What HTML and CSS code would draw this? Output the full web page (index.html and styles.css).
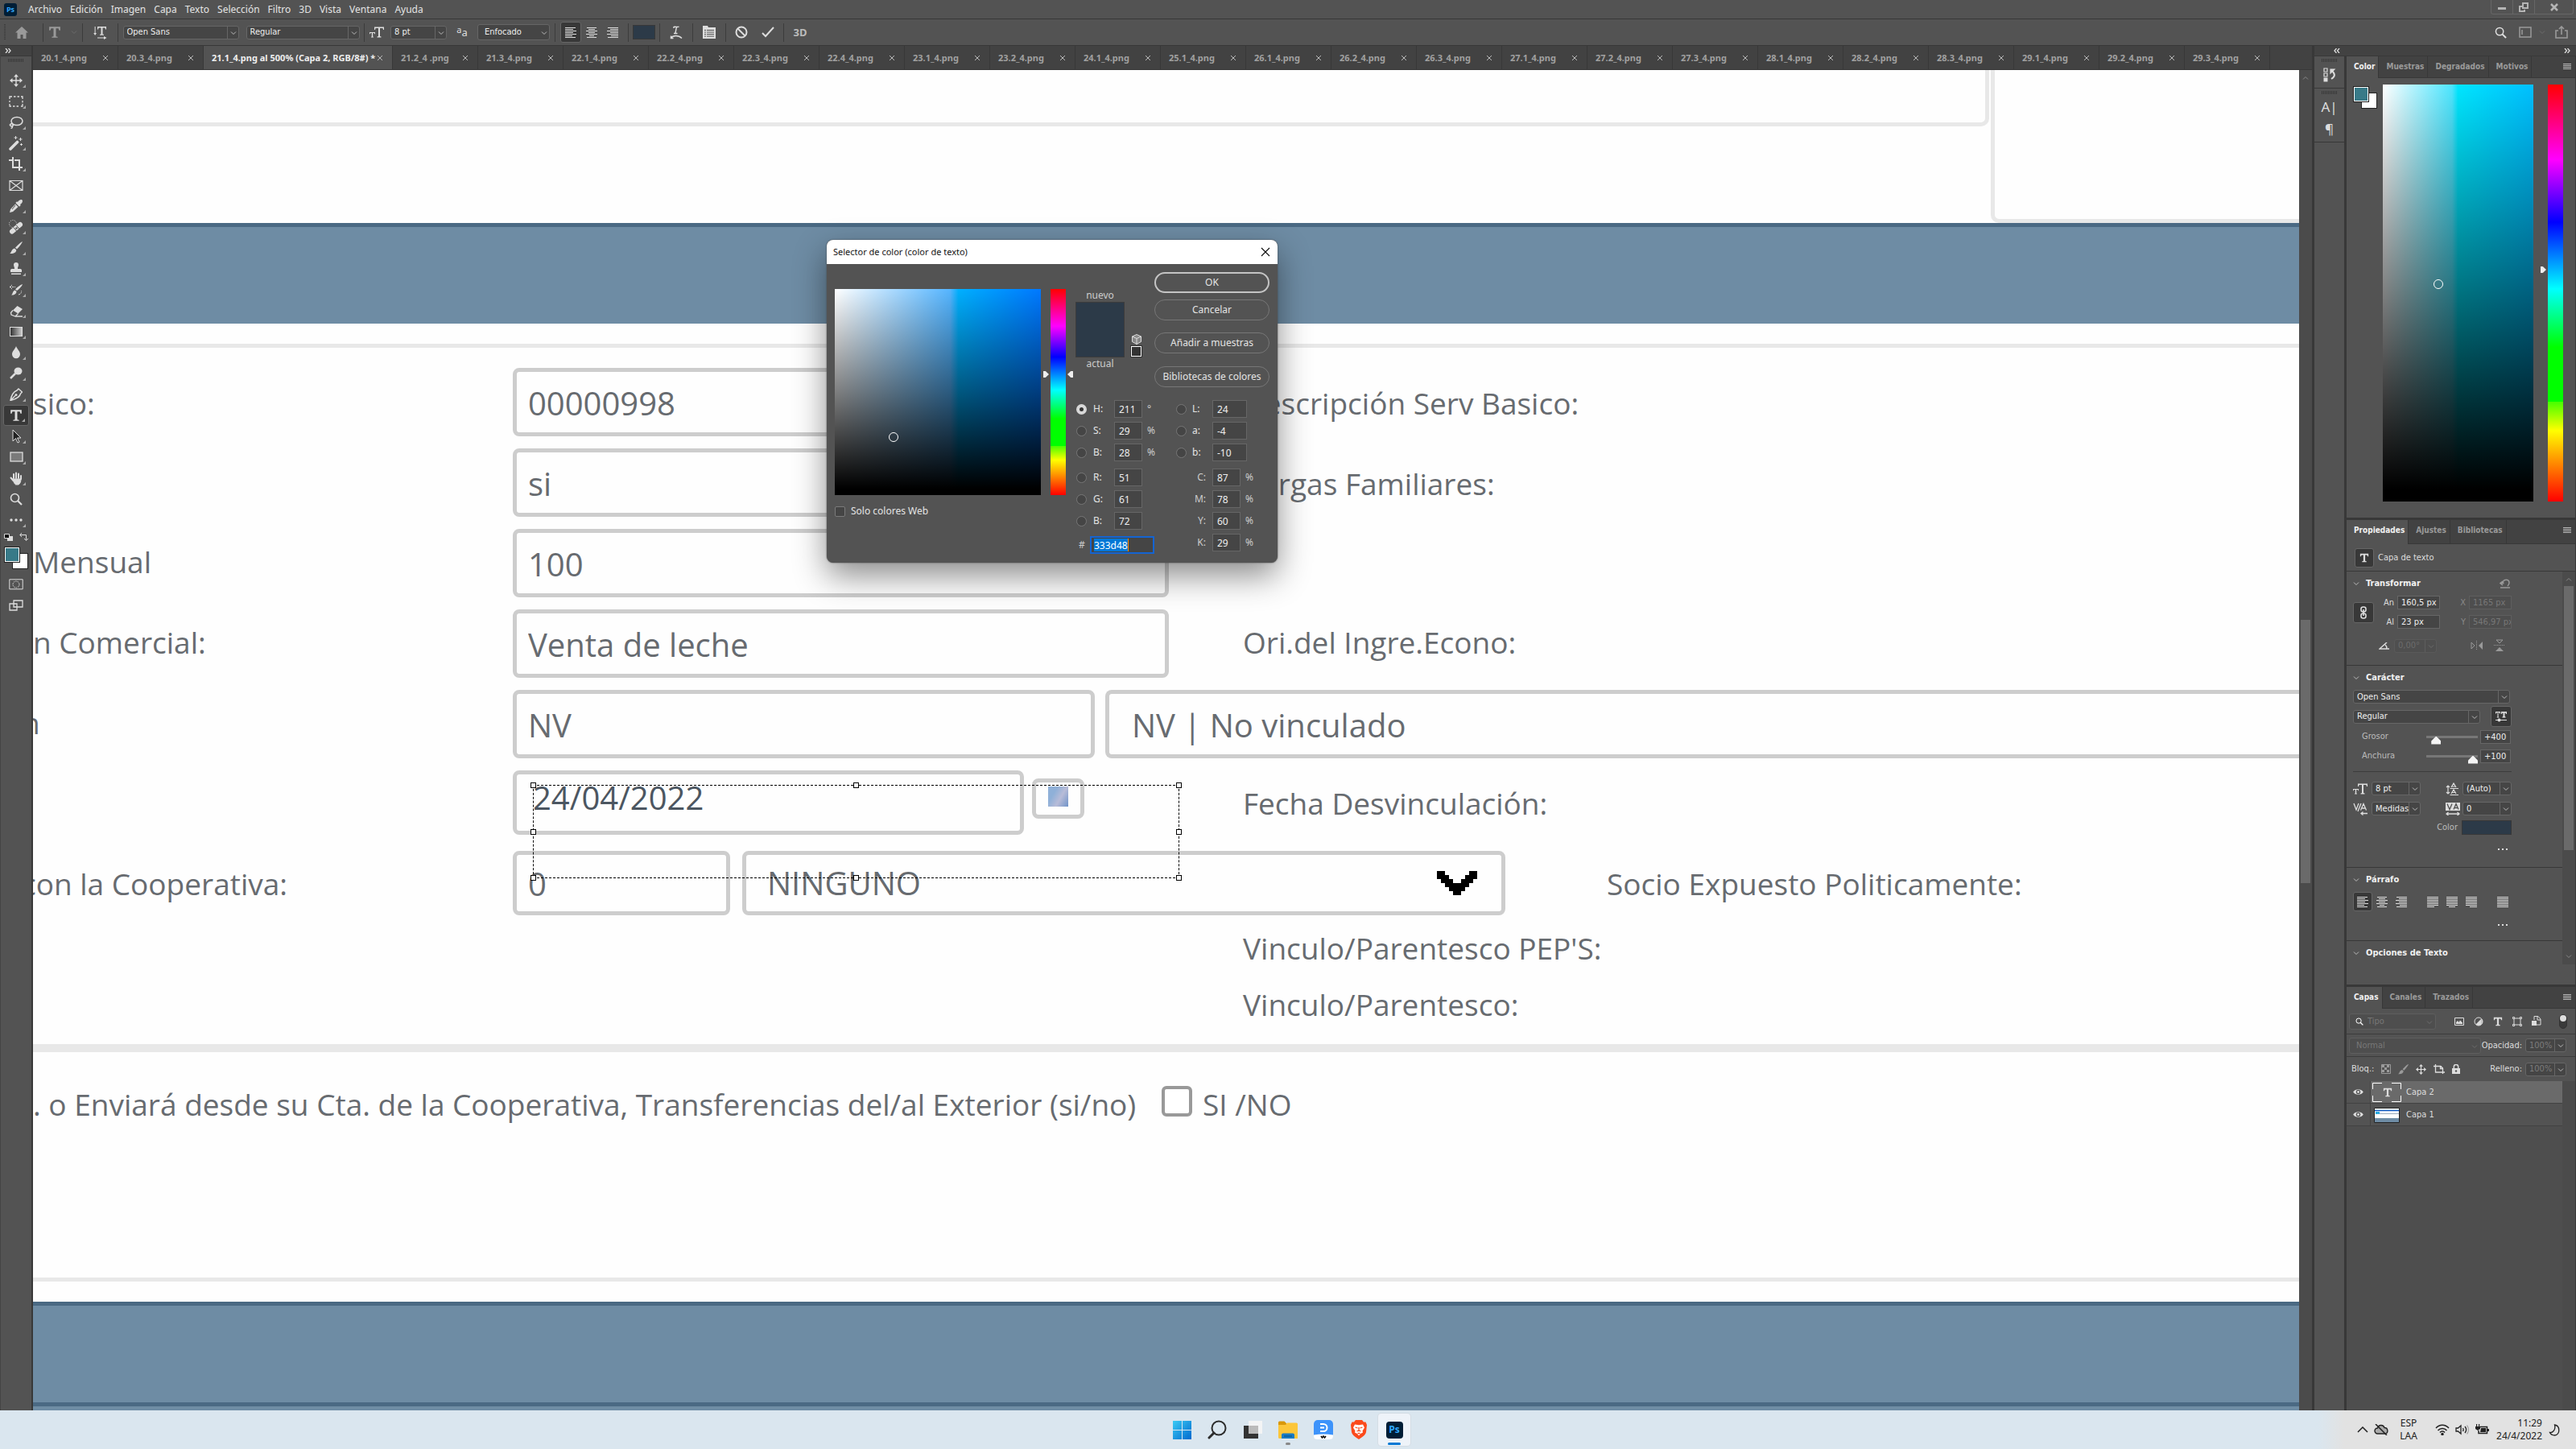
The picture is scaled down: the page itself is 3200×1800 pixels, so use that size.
FILE: index.html
```html
<!DOCTYPE html>
<html lang="es">
<head>
<meta charset="utf-8">
<title>21.1_4.png al 500% (Capa 2, RGB/8#)</title>
<link rel="stylesheet" href="styles.css">
</head>
<body>
<svg class="defs" aria-hidden="true">
  <symbol id="chev" viewBox="0 0 8 8"><path d="M1 2.5l3 3 3-3" fill="none" stroke="currentColor" stroke-width="1"/></symbol>
  <symbol id="x" viewBox="0 0 8 8"><path d="M1 1l6 6M7 1L1 7" fill="none" stroke="currentColor"/></symbol>
  <symbol id="burger" viewBox="0 0 10 8"><path d="M0 .5h10M0 2.5h10M0 4.5h10M0 6.5h10" stroke="currentColor"/></symbol>
  <symbol id="al" viewBox="0 0 14 14"><path d="M0 1.500h13M0 3.500h10M0 5.500h14M0 7.500h10M0 9.500h14M0 11.500h9M0 13.500h13" stroke="currentColor"/></symbol>
  <symbol id="ac" viewBox="0 0 14 14"><path d="M1 1.500h12M3 3.500h8M0 5.500h14M3 7.500h8M0 9.500h14M4 11.500h6M1 13.500h12" stroke="currentColor"/></symbol>
  <symbol id="ar" viewBox="0 0 14 14"><path d="M1 1.500h13M4 3.500h10M0 5.500h14M4 7.500h10M0 9.500h14M5 11.500h9M1 13.500h13" stroke="currentColor"/></symbol>
  <symbol id="jl" viewBox="0 0 14 14"><path d="M0 1.500h14M0 3.500h14M0 5.500h14M0 7.500h14M0 9.500h14M0 11.500h14M0 13.500h9" stroke="currentColor"/></symbol>
  <symbol id="jc" viewBox="0 0 14 14"><path d="M0 1.500h14M0 3.500h14M0 5.500h14M0 7.500h14M0 9.500h14M0 11.500h14M3 13.500h8" stroke="currentColor"/></symbol>
  <symbol id="jr" viewBox="0 0 14 14"><path d="M0 1.500h14M0 3.500h14M0 5.500h14M0 7.500h14M0 9.500h14M0 11.500h14M5 13.500h9" stroke="currentColor"/></symbol>
  <symbol id="jf" viewBox="0 0 14 14"><path d="M0 1.500h14M0 3.500h14M0 5.500h14M0 7.500h14M0 9.500h14M0 11.500h14M0 13.500h14" stroke="currentColor"/></symbol>
  <symbol id="tee" viewBox="0 0 14 14"><path d="M1 1h12v4h-1.200L11 2.800H8.300v8.700l1.900.5V13H3.800v-1l1.900-.5V2.800H3L2.200 5H1z" fill="currentColor"/></symbol>
  <symbol id="tt" viewBox="0 0 18 14"><path d="M6 .5h12v3.500h-1L16.500 2H13v10l1.500.5v1h-5v-1l1.500-.5V2H7.500L7 4H6zM0 7h7v2.200H6.200L6 8H4.200v4.500l.8.3v.7H2v-.7l.8-.3V8H1L.8 9.200H0z" fill="currentColor"/></symbol>
  <symbol id="lens" viewBox="0 0 16 16"><circle cx="6.500" cy="6.500" r="5" fill="none" stroke="currentColor" stroke-width="1.600"/><path d="M10 10l5 5" stroke="currentColor" stroke-width="2.200"/></symbol>
  <symbol id="move" viewBox="0 0 16 16"><path d="M8 0l3 3.500H8.700v3.800h3.800V5L16 8l-3.500 3V8.700H8.700v3.800H11L8 16l-3-3.500h2.300V8.700H3.500V11L0 8l3.500-3v2.300h3.800V3.500H5z" fill="currentColor"/></symbol>
  <symbol id="brush" viewBox="0 0 16 16"><path d="M15.800.200c.6.700-5.300 8.300-6.800 9.300L7 7.700C8.300 6 15-.6 15.800.200zM6.200 8.500l2 1.900c.2 2.700-2.500 5.100-8.200 4.600 2.500-.9 1.800-5.600 6.200-6.500z" fill="currentColor"/></symbol>
  <symbol id="eye" viewBox="0 0 14 10"><path d="M0 5C3 .3 11 .3 14 5c-3 4.700-11 4.700-14 0z" fill="currentColor"/><circle cx="7" cy="5" r="3" fill="#535353"/><circle cx="7" cy="5" r="1.600" fill="currentColor"/></symbol>
  <symbol id="grip" viewBox="0 0 20 4"><path d="M.5 0v4M2.500 0v4M4.500 0v4M6.500 0v4M8.500 0v4M10.500 0v4M12.500 0v4M14.500 0v4M16.500 0v4M18.500 0v4" stroke="#3a3a3a"/></symbol>
</svg>

<header class="menubar">
  <span class="ps-logo">Ps</span>
  <nav>
    <a href="#">Archivo</a><a href="#">Edición</a><a href="#">Imagen</a><a href="#">Capa</a><a href="#">Texto</a><a href="#">Selección</a><a href="#">Filtro</a><a href="#">3D</a><a href="#">Vista</a><a href="#">Ventana</a><a href="#">Ayuda</a>
  </nav>
  <div class="win-controls">
    <button aria-label="Minimizar"><svg width="12" height="12"><rect x="1" y="6" width="10" height="3" fill="#b4b4b4"/></svg></button>
    <button aria-label="Restaurar"><svg width="12" height="12" fill="none" stroke="#b4b4b4" stroke-width="2"><path d="M5 1h6v6H5zM7 9v2H1V5h3"/></svg></button>
    <button class="wide" aria-label="Cerrar"><svg width="12" height="12"><path d="M2 2l8 8M10 2l-8 8" stroke="#b4b4b4" stroke-width="2.500"/></svg></button>
  </div>
</header>

<div class="options">
  <div class="og og-home"><svg class="vgrip" width="3" height="20"><path d="M1 0v20" stroke="#3c3c3c" stroke-width="2" stroke-dasharray="1 1"/></svg>
    <button aria-label="Inicio"><svg width="16" height="16"><path d="M8 1L0 8.500h2.500V16h4v-5h3v5h4V8.500H16z" fill="#9a9a9a"/></svg></button></div>
  <div class="og og-tool"><svg class="dim" width="16" height="16"><use href="#tee"/></svg><svg class="faint" width="8" height="8"><use href="#chev"/></svg></div>
  <div class="og og-mid"><button aria-label="Orientación del texto"><svg width="18" height="17" fill="currentColor"><path d="M5 1h11v3.500h-1L14.500 2.500H11.500v8l1.500.3v1H8v-1l1.500-.3v-8H6.500L6 4.500H5zM1.600 1h1v8H4l-1.900 3L.2 9h1.400zM5 14.500h8v-1.600l3.500 2.100L13 17v-1.500H5z"/></svg></button></div>
  <div class="og og-font">
    <span class="sel s144"><select aria-label="Fuente"><option>Open Sans</option></select><svg><use href="#chev"/></svg></span>
    <span class="sel s141"><select aria-label="Estilo"><option>Regular</option></select><svg><use href="#chev"/></svg></span>
  </div>
  <div class="og og-size">
    <svg class="lt" width="18" height="14"><use href="#tt"/></svg>
    <span class="sel s70"><select aria-label="Tamaño"><option>8 pt</option></select><svg><use href="#chev"/></svg></span>
    <span class="aa"><sup>a</sup>a</span>
    <span class="sel s90 plain"><select aria-label="Suavizado"><option>Enfocado</option></select><svg><use href="#chev"/></svg></span>
  </div>
  <div class="og og-align">
    <button class="sq on" aria-label="Izquierda"><svg width="14" height="14"><use href="#al"/></svg></button>
    <button class="sq" aria-label="Centro"><svg width="14" height="14"><use href="#ac"/></svg></button>
    <button class="sq" aria-label="Derecha"><svg width="14" height="14"><use href="#ar"/></svg></button>
  </div>
  <div class="og og-swatch"><button class="swatch" aria-label="Color del texto"></button></div>
  <div class="og og-one"><svg class="lt" width="16" height="18" fill="none" stroke="currentColor" stroke-width="1.400"><path d="M5 2.500c2-1 4 1 6.500-.5M8.500 2L7 10M5 10.500h4.500M5 2v2M1 16.500c3-4 10-4 14 0M1.500 13.500v3h3"/></svg></div>
  <div class="og og-one"><svg class="lt" width="16" height="16"><path d="M0 0h6l1 2h9v14H0z" fill="currentColor"/><path d="M9 1h7M2 5.500h2M5 5.500h9M2 8h2M5 8h9M2 10.500h2M5 10.500h9M2 13h2M5 13h9" stroke="#535353"/></svg></div>
  <div class="og og-ok">
    <button aria-label="Cancelar edición"><svg width="16" height="16" fill="none" stroke="currentColor" stroke-width="2"><circle cx="8" cy="8" r="6.500"/><path d="M3.500 3.500l9 9"/></svg></button>
    <button aria-label="Confirmar edición"><svg width="16" height="16" fill="none" stroke="currentColor" stroke-width="2"><path d="M1 9l4 4L15 2"/></svg></button>
  </div>
  <div class="og og-one"><b class="three">3D</b></div>
  <div class="opt-right">
    <svg class="lt" width="15" height="15"><use href="#lens"/></svg>
    <svg class="dim space" width="16" height="14" fill="none" stroke="currentColor" stroke-width="1.500"><path d="M1 1h14v12H1zM4 4v6"/></svg>
    <svg class="faint" width="8" height="8"><use href="#chev"/></svg>
    <svg class="dim share" width="16" height="16" fill="none" stroke="currentColor" stroke-width="1.600"><path d="M4 6H1v9h14V6h-3M8 11V1.500M5 4l3-3 3 3"/></svg>
  </div>
</div>

<main class="work">
  <aside class="tools">
    <div class="strip"><svg width="8" height="6" fill="none" stroke="#ddd" stroke-width="1.300"><path d="M1 0l2.500 3L1 6M4.500 0L7 3 4.500 6"/></svg></div>
    <div class="grip-row"><svg width="20" height="4"><use href="#grip"/></svg></div>
    <ul>
      <li><svg width="16" height="16"><use href="#move"/></svg></li>
      <li><svg width="18" height="14" fill="none" stroke="currentColor" stroke-width="1.300"><path d="M1 4V1h3M6 1h2.500M10.500 1H13M15 1h2v3M17 6v2.500M17 10v3h-2M12 13H9.500M7.500 13H5M3 13H1v-3M1 8V6"/></svg></li>
      <li><svg width="18" height="16" fill="none" stroke="currentColor" stroke-width="1.500"><ellipse cx="10" cy="6.500" rx="7" ry="5"/><path d="M5 10c-3-1-5 1.500-2.500 2.500s4-1.500 1.500-2M4 12.500c1 1.500 0 2.500-1.500 3"/></svg></li>
      <li><svg width="18" height="18" stroke="currentColor"><path d="M2 16l8.500-8.500" stroke-width="3.600" stroke-linecap="round"/><path d="M8.500 0v4M6.500 2h4M14.500 2v4M12.500 4h4M15.500 9v3M14 10.500h3"/></svg></li>
      <li><svg width="18" height="18" fill="none" stroke="currentColor" stroke-width="2"><path d="M5 0v13h7M0 4h4M7 4h6v13M14 13h3"/></svg></li>
      <li class="no"><svg width="18" height="15" fill="none" stroke="currentColor" stroke-width="1.200"><path d="M1 1.500h16v12H1zM1 1.500l16 12M17 1.500l-16 12"/></svg></li>
      <li><svg width="16" height="16"><path d="M10 3c2-3 4.500-3.500 5.500-2.500S16 4.500 13 6l.8 1L12 8.700 7.300 4 9 2.200zM7 5.500L10.500 9 4 15l-4 1 1-4z" fill="currentColor"/><path d="M7 7L3 12" stroke="#535353"/></svg></li>
      <li><svg width="18" height="18"><path d="M4 14.500L14 6" stroke="currentColor" stroke-width="6" stroke-linecap="round"/><path d="M5.500 9l5 6M9 6.500l4.500 5.500" stroke="#535353"/><circle cx="9.500" cy="10.500" r="1.200" fill="#535353"/><circle cx="5" cy="5" r="4.500" fill="none" stroke="currentColor" stroke-dasharray="1 1.500"/></svg></li>
      <li><svg width="16" height="16"><use href="#brush"/></svg></li>
      <li><svg width="16" height="16" fill="currentColor"><path d="M5 3a3 3 0 0 1 6 0c0 2-1.200 2.800-1 5h3.500L15 9v3H1V9l1.500-1H6c.2-2.200-1-3-1-5zM2 13.500h12V15H2z"/></svg></li>
      <li><svg width="18" height="16"><path d="M17 1c-1 3-5 7-7 8L8 7.500C10 5 14 2 17 1zM7.500 8.500l2 1.500c0 3-3 5-6.500 4.500 2-1 1.500-5 4.500-6z" fill="currentColor"/><path d="M1 4.500h7M4 2L1 4.500 4 7M12 14c3-.5 4-3 3.500-5" fill="none" stroke="currentColor" stroke-dasharray="2 1"/></svg></li>
      <li><svg width="17" height="15"><path d="M9.500 1L16 5l-5.500 5.500L4 6.500z" fill="currentColor"/><path d="M4 6.500L1.500 9.500 2 12l5 2 3.500-3.500M7 14h9" fill="none" stroke="currentColor" stroke-width="1.300"/></svg></li>
      <li><span class="grad"></span></li>
      <li><svg width="12" height="16"><path d="M6 0c1.500 4 5 6.500 5 10A5 5.200 0 0 1 1 10C1 6.500 4.500 4 6 0z" fill="currentColor"/></svg></li>
      <li><svg width="16" height="16"><ellipse cx="10.500" cy="5" rx="5" ry="4.500" fill="currentColor"/><path d="M7 8l-6 6" stroke="currentColor" stroke-width="2.500"/></svg></li>
      <li><svg width="16" height="16"><path d="M11 1l4.500 4-2 2C12.500 12 7 14 1 15.500 2 10 4 5 9 3zM1.500 15L7 9.500" fill="none" stroke="currentColor" stroke-width="1.500"/><circle cx="8" cy="8.500" r="1.500" fill="currentColor"/></svg></li>
      <li class="on"><svg width="16" height="16"><use href="#tee"/></svg></li>
      <li><svg width="14" height="18"><path d="M3 1v14l3.500-3.500L9 17l2-1-2.500-5H13z" fill="#222" stroke="currentColor"/></svg></li>
      <li><svg width="17" height="14"><rect x="1" y="1" width="15" height="11" fill="#7a7a7a" stroke="currentColor" stroke-width="1.300"/></svg></li>
      <li><svg width="17" height="17" fill="none" stroke="currentColor" stroke-width="2" stroke-linecap="round"><path d="M5 8V3M8 8V1.500M11 8V2.500M14 9V5M1.500 7.500L4.500 11"/><path d="M4 9h10c0 3-1 6-3 7H7.500C6 15 4.500 12.500 4 9z" fill="currentColor" stroke-width="1"/></svg></li>
      <li class="no"><svg width="16" height="16"><use href="#lens"/></svg></li>
      <li><svg width="16" height="4" fill="currentColor"><circle cx="2" cy="2" r="1.700"/><circle cx="8" cy="2" r="1.700"/><circle cx="14" cy="2" r="1.700"/></svg></li>
    </ul>
    <div class="mini"><svg width="11" height="9"><path d="M4 3h7v6H4z" fill="#ddd"/><path d="M.5.500h6v5h-6z" fill="#000" stroke="#ddd"/></svg><svg width="11" height="10" fill="none" stroke="#ddd"><path d="M3 0L.8 2.500 3 5M1 2.500h7.500v6M6 7l2.500 2.500L11 7"/></svg></div>
    <div class="fgbg"><i class="bg"></i><i class="fg"></i></div>
    <div class="tb-row"><svg width="18" height="14" fill="none" stroke="#ddd"><path d="M.8.800h16.400v12H.8z"/><circle cx="9" cy="7" r="4" stroke-dasharray="1.500 1"/></svg></div>
    <div class="tb-row"><svg width="18" height="14" fill="#535353" stroke="#ddd" stroke-width="1.300"><path d="M6 1h11v8H6zM1 5h9v8H1z"/></svg></div>
  </aside>

  <section class="center">
    <div class="doctabs" role="tablist">
      <span class="tab">20.1_4.png<svg><use href="#x"/></svg></span><span class="tab">20.3_4.png<svg><use href="#x"/></svg></span><span class="tab active">21.1_4.png al 500% (Capa 2, RGB/8#) *<svg><use href="#x"/></svg></span><span class="tab">21.2_4 .png<svg><use href="#x"/></svg></span><span class="tab">21.3_4.png<svg><use href="#x"/></svg></span><span class="tab">22.1_4.png<svg><use href="#x"/></svg></span><span class="tab">22.2_4.png<svg><use href="#x"/></svg></span><span class="tab">22.3_4.png<svg><use href="#x"/></svg></span><span class="tab">22.4_4.png<svg><use href="#x"/></svg></span><span class="tab">23.1_4.png<svg><use href="#x"/></svg></span><span class="tab">23.2_4.png<svg><use href="#x"/></svg></span><span class="tab">24.1_4.png<svg><use href="#x"/></svg></span><span class="tab">25.1_4.png<svg><use href="#x"/></svg></span><span class="tab">26.1_4.png<svg><use href="#x"/></svg></span><span class="tab">26.2_4.png<svg><use href="#x"/></svg></span><span class="tab">26.3_4.png<svg><use href="#x"/></svg></span><span class="tab">27.1_4.png<svg><use href="#x"/></svg></span><span class="tab">27.2_4.png<svg><use href="#x"/></svg></span><span class="tab">27.3_4.png<svg><use href="#x"/></svg></span><span class="tab">28.1_4.png<svg><use href="#x"/></svg></span><span class="tab">28.2_4.png<svg><use href="#x"/></svg></span><span class="tab">28.3_4.png<svg><use href="#x"/></svg></span><span class="tab">29.1_4.png<svg><use href="#x"/></svg></span><span class="tab">29.2_4.png<svg><use href="#x"/></svg></span><span class="tab">29.3_4.png<svg><use href="#x"/></svg></span>
    </div>
    <div class="view">
      <div class="canvas">
        <div class="top-boxes"><div class="tb-left"></div><div class="tb-right"></div></div>
        <div class="band"></div>
        <div class="sheet">
          <div class="row upper"><label class="lab" for="f1">sico:</label><input id="f1" class="f w815" value="00000998"><span class="lab2">Descripción Serv Basico:</span></div>
          <div class="row upper"><label class="lab" for="f2"></label><input id="f2" class="f w815" value="si" aria-label="Respuesta"><span class="lab2">Cargas Familiares:</span></div>
          <div class="row"><label class="lab" for="f3">Mensual</label><input id="f3" class="f w815" value="100"></div>
          <div class="row"><label class="lab" for="f4">n Comercial:</label><input id="f4" class="f w815" value="Venta de leche"><span class="lab2">Ori.del Ingre.Econo:</span></div>
          <div class="row"><label class="lab cut" for="f5">n</label><input id="f5" class="f w723" value="NV"><input class="f grow" value="NV | No vinculado" aria-label="Vinculación"></div>
          <div class="row"><label class="lab" for="f6"></label><input id="f6" class="f w635 low date" value="24/04/2022" aria-label="Fecha"><button class="cal" aria-label="Calendario"><i></i></button><span class="lab3">Fecha Desvinculación:</span></div>
          <div class="row last"><label class="lab cut" for="f7">con la Cooperativa:</label><input id="f7" class="f w270 low" value="0"><span class="pick"><select class="f low" aria-label="Relación"><option>NINGUNO</option></select><svg width="50" height="30" shape-rendering="crispEdges"><path d="M0 0h10v5h5v5h5v5h10v-5h5V5h5V0h10v10h-5v5h-5v5h-5v5h-5v5H20v-5h-5v-5h-5v-5H5v-5H0z"/></svg></span><span class="lab4">Socio Expuesto Politicamente:</span></div>
          <div class="sub">Vinculo/Parentesco PEP'S:</div>
          <div class="sub">Vinculo/Parentesco:</div>
        </div>
        <div class="foot"><label for="sn">. o Enviará desde su Cta. de la Cooperativa, Transferencias del/al Exterior (si/no)</label><input type="checkbox" id="sn"><span>SI /NO</span></div>
        <div class="band second"></div>
        <div class="band tail"></div>
        <div class="textbox"><i></i><i></i><i></i><i></i><i></i><i></i><i></i><i></i></div>
      </div>
      <div class="vscroll"><svg width="8" height="8"><path d="M1 5.500l3-3 3 3" fill="none" stroke="#888"/></svg><i></i></div>
    </div>
  </section>

  <div class="side">
    <div class="side-strip"><svg width="8" height="6" fill="none" stroke="#ddd" stroke-width="1.300"><path d="M3.500 0L1 3l2.500 3M7 0L4.500 3 7 6"/></svg><svg width="8" height="6" fill="none" stroke="#ddd" stroke-width="1.300"><path d="M1 0l2.500 3L1 6M4.500 0L7 3 4.500 6"/></svg></div>
    <div class="side-body">
      <div class="dock">
        <div class="dk"><svg width="20" height="4"><use href="#grip"/></svg><button aria-label="Historia"><svg width="16" height="18" fill="none" stroke="currentColor" stroke-width="1.200"><path d="M1 1h4v4H1zM1 7h4v4H1z"/><path d="M.5 12.500h5v5h-5z" fill="currentColor" stroke="none"/><path d="M9 2h5L9 7z" fill="currentColor"/><path d="M11 4c4 4 4 7-1 10" stroke-width="2"/></svg></button></div>
        <div class="dk"><svg width="20" height="4"><use href="#grip"/></svg><button class="ch" aria-label="Carácter">A|</button><button class="ch" aria-label="Párrafo">¶</button></div>
      </div>
      <div class="panels">
        <section class="panel p-color">
          <div class="ptabs"><b class="on">Color</b><b>Muestras</b><b>Degradados</b><b>Motivos</b><svg><use href="#burger"/></svg></div>
          <div class="color-body">
            <div class="fgbg"><i class="bg"></i><i class="fg"></i></div>
            <div class="sv cyan"><i class="dot"></i></div>
            <div class="hue"><i class="ptr"></i></div>
          </div>
        </section>
        <section class="panel p-props">
          <div class="ptabs"><b class="on">Propiedades</b><b>Ajustes</b><b>Bibliotecas</b><svg><use href="#burger"/></svg></div>
          <div class="kind"><span class="sq on"><svg width="12" height="12"><use href="#tee"/></svg></span>Capa de texto</div>
          <div class="props">
            <div class="plist">
              <div class="sec transform">
                <h3><svg><use href="#chev"/></svg>Transformar<svg class="reset" viewBox="0 0 14 12" fill="none" stroke="currentColor" stroke-width="1.500"><path d="M4 8L1 5.500 4 3M1.500 5.500h4M4 5c1-5 8-5 8 0 0 2-1 3-2 4M1 11h12" /></svg></h3>
                <div class="tgrid">
                  <button class="sq on link" aria-label="Vincular"><svg width="10" height="16" fill="none" stroke="#ddd" stroke-width="1.600"><rect x="2" y="1" width="6" height="6" rx="2.500"/><rect x="2" y="9" width="6" height="6" rx="2.500"/><path d="M5 4v8"/></svg></button>
                  <label for="an">An</label><input id="an" value="160,5 px"><label class="off" for="px">X</label><input id="px" value="1165 px" disabled>
                  <label for="al2">Al</label><input id="al2" value="23 px"><label class="off" for="py">Y</label><input id="py" value="546,97 px" disabled>
                </div>
                <div class="angle"><svg width="13" height="9" fill="none" stroke="#ddd" stroke-width="1.500"><path d="M10 0L1 8h12M8 3c2 1.500 2 3 2 5"/></svg><span class="sel s53 off"><select disabled aria-label="Ángulo"><option>0,00°</option></select><svg><use href="#chev"/></svg></span>
                  <svg class="flip" width="16" height="12"><path d="M1 2l4 4-4 4z" fill="none" stroke="#999"/><path d="M15 1v10l-5-5z" fill="#999"/><path d="M7.500 0v12" stroke="#999" stroke-dasharray="1 1"/></svg><svg width="14" height="16"><path d="M3 1h8L7 5z" fill="none" stroke="#999"/><path d="M2 15h10l-5-5z" fill="#999"/><path d="M0 7.500h14" stroke="#999" stroke-dasharray="1 1"/></svg></div>
              </div>
              <div class="sec character">
                <h3><svg><use href="#chev"/></svg>Carácter</h3>
                <span class="sel s195"><select aria-label="Fuente"><option>Open Sans</option></select><svg><use href="#chev"/></svg></span>
                <div class="line"><span class="sel s158"><select aria-label="Estilo"><option>Regular</option></select><svg><use href="#chev"/></svg></span><button class="sq on" aria-label="Fuente variable"><svg width="14" height="14" fill="#ddd"><path d="M0 1h6v2.500H5L4.700 2H3.600v5.500l.7.300v.7H1.800v-.7l.7-.3V2H1.400L1 3.500H0zM7 1h7v3h-1L12.500 2.500h-1V7l1 .5v1H8.500v-1l1-.5V2.500h-1L8 4H7zM0 11h14v1H0z"/><circle cx="4.500" cy="11.500" r="2"/></svg></button></div>
                <div class="line slide"><label for="gr">Grosor</label><input type="range" id="gr" min="0" max="100" value="12"><input class="num" value="+400" aria-label="Grosor"></div>
                <div class="line slide"><label for="anc">Anchura</label><input type="range" id="anc" min="0" max="100" value="100"><input class="num" value="+100" aria-label="Anchura"></div>
                <hr>
                <div class="quad">
                  <svg width="18" height="14"><use href="#tt"/></svg><span class="sel s61"><select aria-label="Tamaño"><option>8 pt</option></select><svg><use href="#chev"/></svg></span>
                  <svg width="18" height="16" fill="none" stroke="currentColor" stroke-width="1.200"><path d="M3 4v10M1 6l2-2 2 2M1 12l2 2 2-2M7 6l3-5 3 5M8 5h4M5.500 7.500H16M7 14l3-5 3 5M8 12.500h4M5.500 15.500H16"/></svg><span class="sel s61"><select aria-label="Interlineado"><option>(Auto)</option></select><svg><use href="#chev"/></svg></span>
                  <svg width="18" height="16" fill="none" stroke="currentColor" stroke-width="1.300"><path d="M1 1l3 8 3-8M10 1L6 11M9.500 9.500l3.500-8 3.500 8M11 7h4M18 13.500h-8M12.500 11.500l-2.500 2 2.500 2"/></svg><span class="sel s61"><select aria-label="Kerning"><option>Medidas</option></select><svg><use href="#chev"/></svg></span>
                  <svg width="18" height="16" fill="none" stroke-width="1.300"><path d="M0 0h18v10H0z" fill="currentColor"/><path d="M2 1.500l3 7 3-7M10 8.500l3-7 3 7M11.300 6.500h3.400" stroke="#535353"/><path d="M1 14h16M3.500 12L1 14l2.500 2M14.500 12l2.500 2-2.500 2" stroke="currentColor"/></svg><span class="sel s61"><select aria-label="Tracking"><option>0</option></select><svg><use href="#chev"/></svg></span>
                </div>
                <div class="clr">Color<button class="swatch" aria-label="Color"></button></div>
                <div class="dots"><i></i><i></i><i></i></div>
              </div>
              <div class="sec para">
                <h3><svg><use href="#chev"/></svg>Párrafo</h3>
                <div class="aligns"><button class="sq on" aria-label="Izquierda"><svg><use href="#al"/></svg></button><button class="sq" aria-label="Centro"><svg><use href="#ac"/></svg></button><button class="sq" aria-label="Derecha"><svg><use href="#ar"/></svg></button><button class="sq g1" aria-label="Justificar izquierda"><svg><use href="#jl"/></svg></button><button class="sq" aria-label="Justificar centro"><svg><use href="#jc"/></svg></button><button class="sq" aria-label="Justificar derecha"><svg><use href="#jr"/></svg></button><button class="sq g1" aria-label="Justificar todo"><svg><use href="#jf"/></svg></button></div>
                <div class="dots"><i></i><i></i><i></i></div>
              </div>
              <div class="sec textopt"><h3><svg><use href="#chev"/></svg>Opciones de Texto</h3></div>
            </div>
            <div class="pscroll"><svg width="8" height="8"><path d="M1 5.500l3-3 3 3" fill="none" stroke="#888"/></svg><i></i><svg class="dn" width="8" height="8"><path d="M1 2.500l3 3 3-3" fill="none" stroke="#888"/></svg></div>
          </div>
        </section>
        <section class="panel p-layers">
          <div class="ptabs"><b class="on">Capas</b><b>Canales</b><b>Trazados</b><svg><use href="#burger"/></svg></div>
          <div class="lrow filter">
            <span class="sel s108 plain off find"><select aria-label="Filtro"><option>Tipo</option></select><svg class="mag"><use href="#lens"/></svg><svg><use href="#chev"/></svg></span>
            <svg width="12" height="10"><path d="M.5.500h11v9H.5z" fill="none" stroke="currentColor"/><path d="M2 8V6l2-2 1.500 2L7 3.500 10 6.500V8z" fill="currentColor"/></svg>
            <svg width="12" height="12"><circle cx="6" cy="6" r="5" fill="none" stroke="currentColor"/><path d="M2.500 9.500A5 5 0 0 0 9.500 9.500V2.500z" fill="currentColor"/><path d="M9.500 2.500A5 5 0 0 1 9.500 9.500z" fill="currentColor"/></svg>
            <svg width="12" height="12"><use href="#tee"/></svg>
            <svg width="12" height="12" fill="none" stroke="currentColor"><path d="M2 2h8v8H2z"/><path d="M.5.500h2v2h-2zM9.500.500h2v2h-2zM.5 9.500h2v2h-2zM9.500 9.500h2v2h-2z" fill="#535353"/></svg>
            <svg width="12" height="13"><path d="M3 5V.5h5L11 4v7H6" fill="none" stroke="currentColor"/><path d="M0 6h6v6H0z" fill="currentColor"/><path d="M7 1v4h4" fill="none" stroke="currentColor"/></svg>
            <i class="toggle"></i>
          </div>
          <div class="lrow"><span class="sel s164 plain off"><select aria-label="Modo"><option>Normal</option></select><svg><use href="#chev"/></svg></span><span class="cap">Opacidad:</span><span class="sel s51 half"><select aria-label="Opacidad"><option>100%</option></select><svg><use href="#chev"/></svg></span></div>
          <div class="lrow lock"><span>Bloq.:</span>
            <svg class="dim" width="12" height="12"><path d="M.5.500h11v11H.5z" fill="none" stroke="currentColor"/><path d="M1 1h3v3H1zM7 1h3v3H7zM4 4h3v3H4zM1 7h3v3H1zM7 7h3v3H7z" fill="currentColor"/></svg>
            <svg class="dim" width="13" height="13"><use href="#brush"/></svg>
            <svg width="13" height="13"><use href="#move"/></svg>
            <svg width="14" height="12" fill="none" stroke="currentColor" stroke-width="1.300"><path d="M0 2.500h9l2.500 2.500v7M2.500 0v10H14M8.500 3v2.500h3"/></svg>
            <svg width="10" height="12"><path d="M0 5h10v7H0z" fill="currentColor"/><path d="M2.300 5V3a2.700 2.500 0 0 1 5.400 0v2" fill="none" stroke="currentColor" stroke-width="1.500"/><circle cx="5" cy="8.500" r="1.200" fill="#535353"/></svg>
            <div class="fill"><span class="cap">Relleno:</span><span class="sel s51 half"><select aria-label="Relleno"><option>100%</option></select><svg><use href="#chev"/></svg></span></div></div>
          <div class="layers">
            <div class="stack">
              <div class="layer on"><span class="eye"><svg width="13" height="9"><use href="#eye"/></svg></span><span class="lname"><svg width="36" height="24"><path d="M.5 8V.5H12M24 .5h11.500V8M35.500 16v7.500H24M12 23.500H.5V16" fill="none" stroke="#fff"/><use href="#tee" x="13" y="6" width="12" height="12"/></svg>Capa 2</span></div>
              <div class="layer"><span class="eye"><svg width="13" height="9"><use href="#eye"/></svg></span><span class="lname"><svg width="36" height="20"><path d="M2.500 1.500h31v18h-31z" fill="#fff" stroke="#222"/><path d="M3 4.500h30" stroke="#0a57c2" stroke-width="1.500"/><path d="M4 6h5v3H4z" fill="#29abe2"/><path d="M9 8.500h24" stroke="#9ab"/><path d="M3 14h30v5H3z" fill="#6e8ca4"/></svg>Capa 1</span></div>
            </div>
          </div>
        </section>
      </div>
    </div>
  </div>
</main>

<footer class="taskbar">
  <span></span>
  <div class="apps">
    <a href="#" aria-label="Inicio"><svg width="24" height="24"><defs><linearGradient id="w" x1="0" y1="0" x2="1" y2="1"><stop offset="0" stop-color="#3ccbf4"/><stop offset="1" stop-color="#0069ce"/></linearGradient></defs><path d="M1 1h11v11H1zM13 1h11v11H13zM1 13h11v11H1zM13 13h11v11H13z" fill="url(#w)"/></svg></a>
    <a href="#" aria-label="Buscar"><svg width="24" height="24" fill="none" stroke="#2d2d2d"><circle cx="14" cy="10" r="8.500" stroke-width="2"/><path d="M8 16l-6 6" stroke-width="3" stroke-linecap="round"/></svg></a>
    <a href="#" aria-label="Vista de tareas"><svg width="24" height="24"><path d="M1 7h18v16H1z" fill="#333"/><path d="M7 1h17v16H7z" fill="#f5f5f5" opacity=".9"/><path d="M7 7h12v10H7z" fill="#bbb"/></svg></a>
    <a href="#" class="run" aria-label="Explorador"><svg width="24" height="24"><path d="M0 3a1.500 1.500 0 0 1 1.500-1.500h6L10 4v4H0z" fill="#d9980a"/><path d="M0 6h9l2-2.500h11.500A1.500 1.500 0 0 1 24 5v18H1.500A1.500 1.500 0 0 1 0 21.500z" fill="#fcc63a"/><path d="M4 23v-4.500A2 2 0 0 1 6 16.500h12a2 2 0 0 1 2 2V23z" fill="#1a7bc4"/><path d="M7 20h10" stroke="#0b5a9a" stroke-width="1.500"/></svg></a>
    <a href="#" aria-label="Chat"><svg width="24" height="24"><rect width="24" height="24" rx="5" fill="#3d93fa"/><path d="M0 18.500q12-2 24 0V20a4 4 0 0 1-4 4H4a4 4 0 0 1-4-4z" fill="#fff"/><path d="M8 5h4a4.500 4.500 0 0 1 0 9H8M8 9.500h5" fill="none" stroke="#fff" stroke-width="2"/><path d="M9 20l1.500 2 1.500-2 1.500 2 1.500-2" fill="none" stroke="#000" stroke-width="1.500"/></svg></a>
    <a href="#" aria-label="Brave"><svg width="22" height="24"><path d="M7 0h8l2 2.500h2.500L21 6l-1 9c-1 4-5 6.500-9 9-4-2.500-8-5-9-9L1 6l1.500-3.500H5z" fill="#fb4a1c"/><path d="M6 5.500l5 .8 5-.8 2 4-2.500 4 .5 2-3 1.500-2 2.500-2-2.500L6 15.500l.5-2L4 9.500z" fill="#fff"/><path d="M6.500 9l3 1M15.500 9l-3 1M11 9v4M8.500 14l2.500-1 2.500 1M9.500 16.500h3" stroke="#fb4a1c" stroke-width="1.300"/></svg></a>
    <a href="#" class="now" aria-label="Photoshop"><span class="ps-logo">Ps</span></a>
  </div>
  <div class="tray">
    <svg width="14" height="8" fill="none" stroke="#222" stroke-width="1.500"><path d="M1 7l6-6 6 6"/></svg>
    <svg width="18" height="14"><path d="M4.500 12a3.500 3.500 0 0 1 0-7C6 0 12 1 13 4.500c5 0 5 7.500 1 7.500z" fill="#aaa" stroke="#222" stroke-width="1.400"/><path d="M2 0l14 14" stroke="#222" stroke-width="1.500"/></svg>
    <span class="lang">ESP<br>LAA</span>
    <svg width="18" height="14" fill="none" stroke="#222" stroke-width="1.500"><path d="M1 5c4.500-5 11.500-5 16 0M3.500 8c3-3.500 8-3.500 11 0M6 10.500c1.500-2 4.500-2 6 0"/><circle cx="9" cy="12.500" r="1" fill="#222"/></svg>
    <svg width="18" height="14" fill="none" stroke="#222" stroke-width="1.300"><path d="M1 5h2.500L7 2v10L3.500 9H1zM9.500 5c1 1.500 1 2.500 0 4M12 3c2 2.500 2 5.500 0 8"/><path d="M14.500 1.500c2.500 3.500 2.500 7.500 0 11" stroke="#aaa"/></svg>
    <svg width="18" height="14"><path d="M4 8v3.500h10.500v-8H6" fill="none" stroke="#222" stroke-width="1.500"/><path d="M7 5h6v5H6zM15 6h2v3h-2zM0 3h6v3L3 8 0 6zM1 0h1.200v3H1zM4 0h1.200v3H4z" fill="#222"/></svg>
    <span class="clock">11:29<br>24/4/2022</span>
    <svg width="14" height="15"><path d="M7.500 1c7 1 7 12.500 0 13-3 0-5-1.500-6-3.500C5.500 11 9 7 7.500 1z" fill="none" stroke="#222" stroke-width="1.300"/></svg>
  </div>
</footer>

<div class="dialog" role="dialog" aria-labelledby="dt">
  <div class="dtitle"><span id="dt">Selector de color (color de texto)</span><button aria-label="Cerrar"><svg width="12" height="12"><path d="M1 1l10 10M11 1L1 11" stroke="#111" stroke-width="1.200"/></svg></button></div>
  <div class="dbody">
    <div class="dleft">
      <div class="pickers"><div class="sv azure"><i class="dot"></i></div><div class="hue"><i class="ptr"></i><i class="ptr right"></i></div></div>
      <label class="web"><input type="checkbox">Solo colores Web</label>
    </div>
    <div class="dright">
      <div class="dtop">
        <div class="prev"><span>nuevo</span><i></i><span>actual</span></div>
        <div class="cube"><svg width="12" height="13"><path d="M6 .5l5.500 2.500v6.500L6 12.500.5 9.500V3z" fill="#888" stroke="#ddd"/><path d="M.5 3L6 5.500 11.500 3M6 5.500v7" fill="none" stroke="#ddd"/></svg><i></i></div>
        <div class="btns"><button class="ok">OK</button><button>Cancelar</button><button class="far">Añadir a muestras</button><button class="far">Bibliotecas de colores</button></div>
      </div>
      <div class="vals">
        <div class="vcol">
          <div class="v"><input type="radio" name="c" id="rh" checked><label for="rh">H:</label><input value="211" aria-label="H"><span>°</span></div>
          <div class="v"><input type="radio" name="c" id="rs"><label for="rs">S:</label><input value="29" aria-label="S"><span>%</span></div>
          <div class="v"><input type="radio" name="c" id="rb"><label for="rb">B:</label><input value="28" aria-label="B"><span>%</span></div>
          <div class="v gap"><input type="radio" name="c" id="rr"><label for="rr">R:</label><input value="51" aria-label="R"></div>
          <div class="v"><input type="radio" name="c" id="rg"><label for="rg">G:</label><input value="61" aria-label="G"></div>
          <div class="v"><input type="radio" name="c" id="rbl"><label for="rbl">B:</label><input value="72" aria-label="B azul"></div>
          <div class="v hex"><label for="hx">#</label><input id="hx" value="333d48"></div>
        </div>
        <div class="vcol">
          <div class="v"><input type="radio" name="c" id="rl"><label for="rl">L:</label><input class="wide" value="24" aria-label="L"></div>
          <div class="v"><input type="radio" name="c" id="ra"><label for="ra">a:</label><input class="wide" value="-4" aria-label="a"></div>
          <div class="v"><input type="radio" name="c" id="rbb"><label for="rbb">b:</label><input class="wide" value="-10" aria-label="b"></div>
          <div class="v gap r"><label for="cc">C:</label><input id="cc" value="87"><span>%</span></div>
          <div class="v r"><label for="cm">M:</label><input id="cm" value="78"><span>%</span></div>
          <div class="v r"><label for="cy">Y:</label><input id="cy" value="60"><span>%</span></div>
          <div class="v r"><label for="ck">K:</label><input id="ck" value="29"><span>%</span></div>
        </div>
      </div>
    </div>
  </div>
</div>
</body>
</html>
```
FILE: styles.css
```css
*{box-sizing:border-box}
body{margin:0;height:100vh;display:flex;flex-direction:column;overflow:hidden;position:relative;background:#535353;color:#ddd;font:11px/14px "DejaVu Sans Condensed","Noto Sans",sans-serif}
.defs{position:absolute;width:0;height:0}
svg{display:block;flex:none}
button{padding:0;margin:0;border:0;background:none;color:inherit;font:inherit;display:flex;align-items:center;justify-content:center}
input,select{font:inherit;color:#eee;margin:0;border-radius:0}
a{color:inherit;text-decoration:none}
.dim{color:#9a9a9a}.faint{color:#6c6c6c}.lt{color:#ddd}

.menubar{height:24px;border-bottom:1px solid #383838;display:flex;align-items:center;padding-left:5px}
.ps-logo{width:16px;height:16px;border-radius:3px;background:#001e36;color:#31a8ff;font:bold 9px/16px "Open Sans",sans-serif;text-align:center}
.menubar nav{display:flex;gap:10px;margin-left:14px;font:12px/22px "Noto Sans",sans-serif;color:#e4e4e4}
.win-controls{display:flex;height:18px;margin:0 3px 5px auto;border:1px solid #666;border-top:0;border-radius:0 0 3px 3px}
.win-controls button{width:27px;border-right:1px solid #666}
.win-controls .wide{width:47px;border:0}

.options{height:33px;border-bottom:1px solid #383838;display:flex;align-items:center}
.og{height:23px;display:flex;align-items:center;justify-content:center;border-left:1px solid #3c3c3c}
.og-home{width:53px;border:0;justify-content:flex-start;gap:11px;padding-left:5px}
.og-tool{width:49px;gap:12px}
.og-mid{width:44px}
.og-font{width:306px;gap:9px}
.og-size{width:237px;gap:8px}
.og-align{width:91px}
.og-swatch{width:39px}
.og-one{width:41px}
.og-ok{width:72px;gap:17px}
.aa{width:22px;color:#ddd;font:13px/16px "Noto Sans",sans-serif;text-align:center}
.aa sup{font-size:11px;line-height:8px;vertical-align:4px}
.three{font:bold 13px/16px "Noto Sans",sans-serif;color:#bbb}
.swatch{width:28px;height:18px;background:#2c3a48;border:1px solid #383838}
.opt-right{margin-left:auto;display:flex;align-items:center;padding-right:10px}
.opt-right .space{margin:0 9px 0 15px}
.opt-right .share{margin-left:12px}
.sq{width:26px;height:26px;color:#ddd;display:flex;align-items:center;justify-content:center;flex:none}
.sq.on{background:#383838;border:1px solid #666;border-radius:3px}

.sel{position:relative;display:block;height:17px;flex:none}
.sel select{appearance:none;display:block;width:100%;height:100%;padding:0 0 0 4px;background:#454545;border:1px solid #666;border-radius:3px;line-height:14px;outline:0}
.sel svg{position:absolute;right:3px;top:5px;width:8px;height:8px;color:#bbb}
.sel::after{content:"";position:absolute;right:14px;top:1px;bottom:1px;width:1px;background:#666}
.sel.plain::after{display:none}
.sel.off select{color:#777;background:#4e4e4e;border-color:#5e5e5e}
.sel.off svg{color:#6c6c6c}.sel.off::after{background:#5e5e5e}
.sel.half select{color:#7c7c7c}
.s144{width:144px}.s141{width:141px}.s70{width:70px}.s90{width:90px}.s53{width:53px}.s195{width:195px}.s158{width:158px}.s61{width:61px}.s108{width:108px}.s164{width:164px}.s51{width:51px}
.s90{height:20px}.s90 select{padding-left:8px}.s90 svg{top:7px}

.work{flex:1;min-height:0;display:flex}
.tools{width:41px;border-right:2px solid #383838;border-left:1px solid #444;display:flex;flex-direction:column;align-items:center}
.strip{align-self:stretch;height:13px;background:#424242;border-bottom:1px solid #383838;display:flex;align-items:center;padding-left:5px}
.grip-row{height:17px;padding-top:3px}
.tools ul{list-style:none;margin:0;padding:0}
.tools li{position:relative;width:32px;height:26px;display:flex;align-items:center;justify-content:center;color:#ddd}
.tools li::after{content:"";position:absolute;right:4px;bottom:4px;border:2px solid;border-color:transparent #aaa #aaa transparent}
.tools li.no::after{display:none}
.tools li.on{background:#383838;border:1px solid #666;border-radius:3px}
.grad{width:16px;height:12px;border:1px solid #ddd;background:linear-gradient(90deg,#333,#ccc)}
.mini{height:20px;width:30px;display:flex;align-items:flex-end;justify-content:space-between;padding-bottom:7px}
.fgbg{position:relative;width:30px;height:28px}
.fgbg i{position:absolute;width:20px;height:20px;border:1px solid #222}
.fgbg .bg{right:0;bottom:0;background:#fff}
.fgbg .fg{left:0;top:0;background:#387a88;box-shadow:inset 0 0 0 1px #fff}
.tb-row{height:26px;display:flex;align-items:center}
.fgbg+.tb-row{margin-top:6px}

.center{flex:1;min-width:0;display:flex;flex-direction:column;border-right:3px solid #383838}
.doctabs{height:30px;background:#424242;border-bottom:1px solid #383838;display:flex}
.tab{width:106px;flex:none;border-right:1px solid #383838;display:flex;align-items:center;justify-content:space-between;padding:0 11px 0 10px;color:#a0a0a0;font:bold 11px/28px "Noto Sans",sans-serif;white-space:nowrap}
.tab svg{width:8px;height:8px;color:#bbb}
.tab.active{width:235px;background:#535353;color:#eee}
.view{flex:1;min-height:0;display:flex}
.canvas{flex:1;min-width:0;position:relative;overflow:hidden;background:#fefefe;color:#676b70;font:37px/50px "Open Sans",sans-serif}
.vscroll{width:16px;background:#4b4b4b;display:flex;flex-direction:column;align-items:center;padding-top:6px}
.vscroll i{width:12px;height:327px;margin-top:669px;background:#6a6a6a}

.top-boxes{height:190px;display:flex;gap:2px}
.tb-left{width:2430px;height:70px;border:solid #e8e8e8;border-width:0 5px 5px 0;border-radius:0 0 10px 0}
.tb-right{flex:1;height:190px;border:solid #e8e8e8;border-width:0 0 5px 5px;border-radius:0 0 0 10px}
.band{height:125px;background:#6e8ca4;border-top:5px solid #4a6983}
.sheet{margin-top:25px;height:880px;border:solid #e8e8e8;border-width:5px 0 10px;padding-top:25px}
.row{display:flex;height:100px;white-space:nowrap;line-height:82px}
.row.upper{line-height:88px}
.row.last{height:86px}
.lab{width:596px;flex:none}
.lab.cut{width:610px;margin-left:-14px}
.f{height:85px;border:5px solid #cdcdcd;border-radius:8px;background:#fefefe;color:#676b70;padding:2px 14px 0;outline:0;flex:none;font-size:40px}
.f.low{height:80px}
.f.date{padding:0 20px 12px;color:#4c5661}
.w815{width:815px}.w723{width:723px}.w635{width:635px}.w270{width:270px}
.f.grow{flex:1;min-width:0;margin-left:13px;padding-left:28px;border-right:0;border-radius:8px 0 0 8px}
.lab2{margin-left:92px}
.lab3{margin-left:197px}
.lab4{margin-left:126px}
.cal{width:65px;height:50px;margin:10px 0 0 10px;border:5px solid #cdcdcd;border-radius:8px;align-items:flex-start;padding-top:5px}
.cal i{width:25px;height:25px;background:linear-gradient(120deg,#8fb0d8 30%,#b8bcd8 60%,#6f93c8)}
.pick{position:relative;width:948px;margin-left:15px}
.pick .f{appearance:none;display:block;width:100%;padding:0 0 0 26px;line-height:54px}
.pick svg{position:absolute;right:35px;top:25px}
.sub{height:70px;line-height:70px;padding-left:1503px}
.foot{height:285px;padding-top:37px;margin-bottom:25px;border-bottom:5px solid #e8e8e8;display:flex;align-items:flex-start;line-height:56px;white-space:nowrap}
.foot label{width:1402px;flex:none}
.foot input{appearance:none;width:38px;height:38px;margin:5px 13px 0 0;border:4px solid #999;border-radius:6px;background:#fff}
.band.tail{height:10px}
.textbox{position:absolute;left:621px;top:888px;width:803px;height:116px;border:1px dashed #000;display:grid;grid-template-columns:repeat(3,7px);grid-template-rows:repeat(3,7px);justify-content:space-between;align-content:space-between;margin:0;padding:0}
.textbox i{width:7px;height:7px;border:1px solid #000;background:#fff}
.textbox i:nth-child(5){grid-column:3}
.textbox i:nth-child(-n+3){margin-top:-4px}
.textbox i:nth-child(n+6){margin-top:4px}
.textbox i:nth-child(1),.textbox i:nth-child(4),.textbox i:nth-child(6){margin-left:-4px}
.textbox i:nth-child(3),.textbox i:nth-child(5),.textbox i:nth-child(8){margin-left:4px}

.side{width:325px;flex:none;display:flex;flex-direction:column}
.side-strip{height:13px;background:#424242;border-bottom:1px solid #383838;display:flex;align-items:center;justify-content:space-between;padding:0 7px 0 24px}
.side-body{flex:1;min-height:0;display:flex}
.dock{width:40px;border-right:3px solid #383838}
.dk{border-bottom:1px solid #383838;display:flex;flex-direction:column;align-items:center;padding:3px 0 5px;gap:5px;color:#ddd}
.dk button{height:22px}
.dk .ch{font:17px/22px "Noto Sans",sans-serif}
.panels{flex:1;min-width:0;display:flex;flex-direction:column;border-right:1px solid #383838}
.panel{border-bottom:3px solid #383838}
.ptabs{height:27px;background:#424242;display:flex;align-items:stretch;position:relative}
.ptabs b{padding:0 4px 0 9px;border:solid #383838;border-width:0 1px 1px 0;color:#9a9a9a;font:bold 10px/26px "DejaVu Sans Condensed","Noto Sans",sans-serif}
.ptabs b.on{background:#535353;color:#f0f0f0;border-bottom:0}
.ptabs::after{content:"";flex:1;border-bottom:1px solid #383838}
.ptabs svg{position:absolute;right:5px;top:9px;width:10px;height:8px;color:#bbb}
.p-color{height:576px}
.color-body{display:flex;padding:8px 15px 0 8px}
.color-body .fgbg{margin-top:2px}
.sv{position:relative;flex:none}
.sv.cyan{width:187px;height:518px;margin-left:7px;background:linear-gradient(to top,#000 3%,rgba(0,0,0,.5) 50%,transparent),linear-gradient(90deg,#fff,#4de6ff 46%,#00e6ff 50%,#00bfff)}
.sv.azure{width:256px;height:256px;background:linear-gradient(to top,#000 3%,rgba(0,0,0,.5) 50%,transparent),linear-gradient(90deg,#fff,#55b5ff 56%,#00b0ff 60%,#0078ff)}
.dot{position:absolute;width:12px;height:12px;border:1px solid #fff;border-radius:50%}
.cyan .dot{left:63px;top:242px}
.azure .dot{left:67px;top:178px}
.hue{position:relative;width:19px;background:linear-gradient(#f00,#f0f 18%,#00f 33%,#0ff 49%,#0f0 63%,#0f0 76%,#4f0 76%,#ff0 83%,#f00)}
.color-body .hue{margin-left:auto}
.ptr{position:absolute;left:-9px;width:7px;height:8px;background:#eee;clip-path:polygon(0 0,40% 0,100% 50%,40% 100%,0 100%)}
.color-body .ptr{top:226px}
.pickers .ptr{top:102px}
.ptr.right{left:auto;right:-9px;transform:rotate(180deg)}

.p-props{height:580px;display:flex;flex-direction:column}
.p-props .ptabs{height:30px}
.kind{height:34px;border-bottom:1px solid #383838;display:flex;align-items:center;gap:5px;padding-left:10px}
.kind .sq{width:24px;height:24px}
.props{height:488px;display:flex}
.plist{flex:1}
.sec{border-bottom:1px solid #383838;padding-left:8px}
.sec h3{margin:0;height:30px;display:flex;align-items:center;gap:8px;padding-left:0;font:bold 11px/14px "DejaVu Sans Condensed","Noto Sans",sans-serif;color:#f0f0f0}
.sec h3 svg{width:8px;height:8px;color:#bbb}
.sec h3 svg.reset{width:14px;height:12px;margin-left:auto;margin-right:64px;color:#999}
.transform{height:117px}
.tgrid{display:grid;grid-template-columns:26px 21px 53px 28px 53px;grid-template-rows:17px 17px;gap:7px 4px;align-items:center}
.tgrid .link{grid-row:1/3;height:26px}
.tgrid label{text-align:right}.off{color:#888}
.tgrid input,.num{width:53px;height:17px;background:#454545;border:1px solid #666;padding:0 0 0 4px}
.tgrid input:disabled{background:#4e4e4e;border-color:#5e5e5e;color:#777}
.angle{display:flex;align-items:center;height:18px;margin-top:12px;padding-left:32px;gap:6px}
.angle .flip{margin-left:36px;margin-right:7px}
.character{height:251px}
.line{display:flex;align-items:center;justify-content:space-between;width:197px;height:24px;margin-top:4px}
.line+.slide{margin-top:2px}
.slide{padding:0 1px 0 11px;height:22px}
.slide label{width:80px;color:#bbb}
.num{width:38px}
input[type=range]{appearance:none;width:64px;height:14px;background:none;margin-right:3px}
input[type=range]::-webkit-slider-runnable-track{height:3px;background:#777}
input[type=range]::-webkit-slider-thumb{appearance:none;width:12px;height:10px;margin-top:1px;background:#f4f4f4;clip-path:polygon(50% 0,100% 60%,100% 100%,0 100%,0 60%)}
hr{width:197px;margin:8px 0 12px;border:0;border-top:1px solid #3c3c3c}
.quad{display:grid;grid-template-columns:20px 61px 46px 61px;column-gap:3px;row-gap:8px;align-items:center}
.quad>svg:nth-of-type(even){justify-self:end}
.clr{display:flex;align-items:center;justify-content:flex-end;gap:5px;width:197px;height:18px;margin-top:6px;color:#bbb}
.clr .swatch{width:62px}
.dots{display:flex;gap:3px;width:192px;justify-content:flex-end;margin-top:17px}
.dots i{width:2px;height:2px;background:#ddd}
.para{height:91px}
.aligns{display:flex;color:#ddd}
.aligns .sq{width:24px;height:24px}
.aligns svg{width:14px;height:14px}
.aligns .g1{margin-left:15px}
.para .dots{margin-top:16px}
.textopt{border:0}
.pscroll{width:16px;background:#4b4b4b;display:flex;flex-direction:column;align-items:center;padding:6px 0}
.pscroll i{width:12px;height:328px;margin-top:4px;background:#6a6a6a}
.pscroll .dn{margin-top:auto}

.p-layers{flex:1;display:flex;flex-direction:column;border:0}
.lrow{height:28px;flex:none;border-bottom:1px solid #3c3c3c;display:flex;align-items:center;padding:0 11px 0 3px}
.lrow .cap{margin-left:auto;margin-right:4px}
.filter{height:32px;gap:12px}
.filter>.sel{margin-right:11px}
.lrow .plain{height:20px}.lrow .plain select{padding-left:8px}.lrow .plain svg{top:7px;right:4px}
.lrow .find select{padding-left:22px}
.lrow .find svg.mag{left:8px;top:5px;width:10px;height:10px;color:#fff}
.toggle{width:10px;height:18px;border-radius:5px;background:#3a3a3a;border:1px solid #333;margin-left:auto;margin-right:-1px}
.toggle::before{content:"";display:block;width:8px;height:8px;border-radius:50%;background:#ddd}
.lock{height:30px;border:0;gap:9px;padding-left:6px}
.fill{margin-left:auto;display:flex;align-items:center}
.layers{flex:1;background:#4b4b4b;padding-right:16px}
.stack{height:100%;background:#4e4e4e}
.layer{display:flex;height:28px;background:#535353;border-bottom:1px solid #424242}
.eye{width:30px;border-right:1px solid #424242;display:flex;align-items:center;justify-content:center}
.lname{flex:1;display:flex;align-items:center;gap:6px;padding-left:2px}
.layer.on .lname{background:#6a6a6a}

.taskbar{height:48px;background:linear-gradient(90deg,#dae6ef 90%,#e2e2e2 91%);display:grid;grid-template-columns:1fr auto 1fr;color:#222}
.apps{display:flex;align-items:center;gap:4px}
.apps a{position:relative;width:40px;height:40px;display:flex;align-items:center;justify-content:center;border-radius:4px}
.apps a.now{background:#eef3f9;box-shadow:0 0 0 1px #d4dde4}
.apps .ps-logo{width:21px;height:21px;border-radius:4px;font-size:12px;line-height:20px}
.apps .run::after,.apps .now::after{content:"";position:absolute;bottom:1px;width:6px;height:3px;border-radius:2px;background:#888}
.apps .now::after{width:16px;background:#0078d4}
.tray{justify-self:end;display:flex;align-items:center;gap:7px;padding-right:20px;font:12px/16px "Noto Sans",sans-serif}
.tray .lang{text-align:center;width:40px;margin:0 6px 0 -2px}
.clock{text-align:right;width:58px;margin-right:1px}

.dialog{position:absolute;left:1027px;top:298px;width:560px;height:401px;background:#535353;border-radius:8px;box-shadow:0 0 2px #444,0 16px 40px rgba(0,0,0,.45);overflow:hidden;font:12px/16px "Noto Sans",sans-serif;color:#e4e4e4}
.dtitle{height:30px;background:#fff;color:#111;display:flex;align-items:center;justify-content:space-between;padding:0 9px 0 8px;font-size:11px}
.dbody{display:flex;gap:12px;padding:0 10px}
.dleft{padding-top:31px}
.pickers{display:flex;gap:12px}
.web{display:flex;align-items:center;gap:7px;margin-top:12px}
.web input{appearance:none;width:13px;height:13px;border:1px solid #7a7a7a;border-radius:2px;background:#454545}
.dright{flex:1;min-width:0}
.dtop{display:flex;height:159px;padding-top:10px}
.prev{width:61px;margin-top:21px;text-align:center;color:#ccc}
.prev i{display:block;height:69px;background:#2c3a48;border:1px solid #3c3c3c}
.cube{margin:77px 0 0 8px;display:flex;flex-direction:column;align-items:center;gap:2px}
.cube i{width:13px;height:13px;border:1px solid #fff;background:#333;outline:1px solid #333}
.btns{margin-left:auto;width:143px}
.btns button{width:143px;height:26px;border:1px solid #777;border-radius:13px;margin-bottom:8px;white-space:nowrap}
.btns .ok{border:2px solid #c4c4c4}
.btns .far{margin-top:15px;margin-bottom:16px}
.vals{display:flex;gap:0;padding-top:10px}
.vcol{width:124px;flex:none}
.v{display:flex;align-items:center;height:22px;margin-bottom:5px}
.v.gap{margin-top:9px}
.v input{width:35px;height:22px;border:1px solid #666;background:#454545;padding:0 0 0 5px;outline:0}
.v input.wide{width:43px}
.v label{width:26px}
.v span{margin-left:6px;color:#ccc}
.v input[type=radio]{appearance:none;width:13px;height:13px;border:1px solid #777;border-radius:50%;padding:0;margin:0 8px 0 1px}
.v input[type=radio]:checked{background:#333;border:4px solid #d8d8d8}
.vcol+.vcol .v input[type=radio]{margin-right:7px}
.vcol+.vcol .v label{width:25px}
.vcol+.vcol .v.r label{width:46px;padding-right:8px;text-align:right;color:#ccc}
.v.hex{margin-top:8px}
.v.hex label{width:14px;margin-left:4px;color:#ccc}
.v.hex input{width:80px;border:2px solid #1464d2;padding:0 0 0 3px;color:#fff;background:linear-gradient(90deg,transparent 3px,#0078d7 3px,#0078d7 45px,#f80 45px,#f80 46px,transparent 46px) 0 1px/100% 16px no-repeat #454545}
```
